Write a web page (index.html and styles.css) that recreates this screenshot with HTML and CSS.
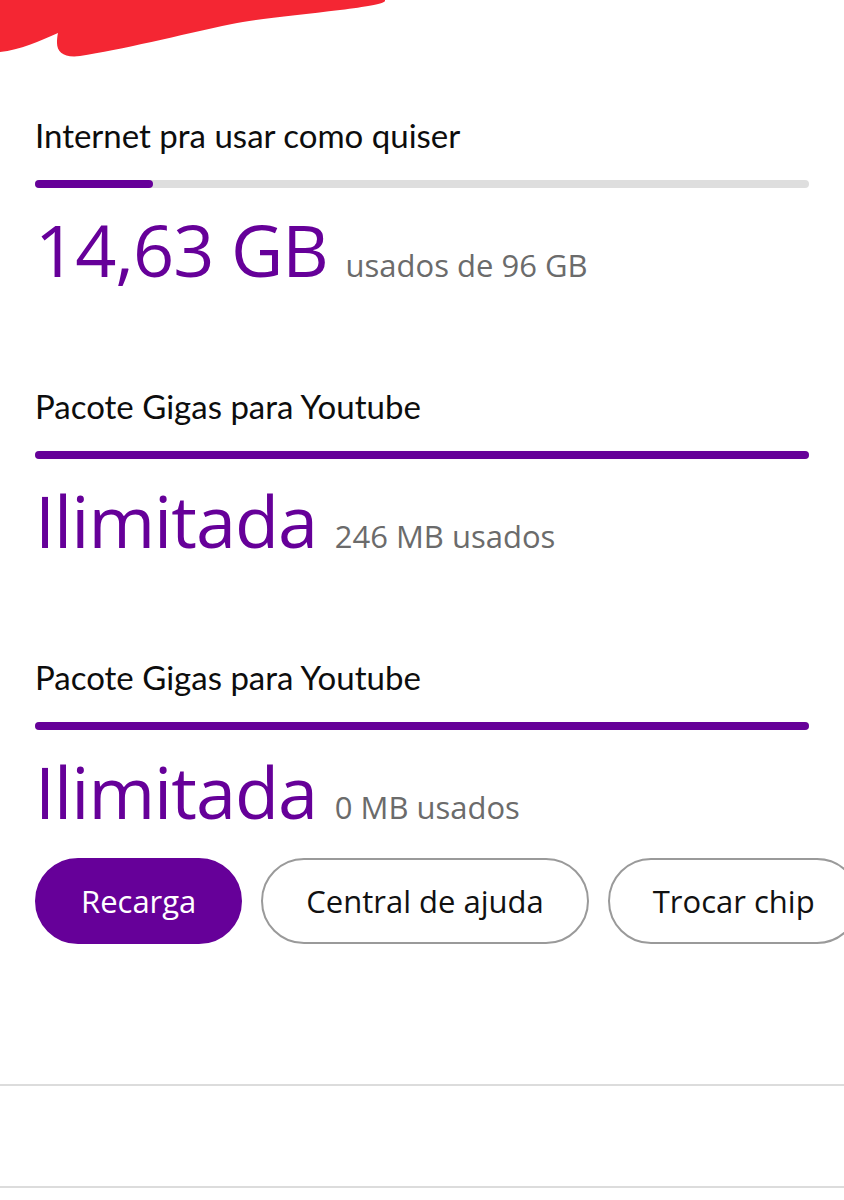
FILE: index.html
```html
<!DOCTYPE html>
<html lang="pt-BR">

<head>
	<meta charset="UTF-8">
	<meta name="viewport" content="width=device-width, initial-scale=1.0">
	<title>Meu consumo</title>
	<link rel="stylesheet" href="styles.css">
</head>

<body>
	<svg class="rabisco" width="385" height="58" viewBox="0 0 385 58">
		<path d="M0 0 H386 C384 4 370 6 340 10 C300 15 255 19 232 24 C180 35 120 50 80 56 C64 58 57 52 57 43 C57 37 58 33 58 33 C40 41 20 50 0 52 Z" fill="#f42633" />
	</svg>

	<main class="consumo">
		<section class="pacote">
			<h2>Internet pra usar como quiser</h2>
			<div class="barra"><div class="preenchido" style="width: 15.2%"></div></div>
			<p class="valor">14,63 GB <span>usados de 96 GB</span></p>
		</section>

		<section class="pacote">
			<h2>Pacote Gigas para Youtube</h2>
			<div class="barra"><div class="preenchido" style="width: 100%"></div></div>
			<p class="valor">Ilimitada <span>246 MB usados</span></p>
		</section>

		<section class="pacote">
			<h2>Pacote Gigas para Youtube</h2>
			<div class="barra"><div class="preenchido" style="width: 100%"></div></div>
			<p class="valor">Ilimitada <span>0 MB usados</span></p>
		</section>

		<div class="acoes">
			<button class="botao principal">Recarga</button>
			<button class="botao">Central de ajuda</button>
			<button class="botao">Trocar chip</button>
		</div>
	</main>

	<div class="rodape"></div>
</body>

</html>
```

FILE: styles.css
```css
body {
	margin: 0;
	background: #fff;
	font-family: "Lato", "Open Sans", sans-serif;
	color: #111;
	overflow-x: hidden;
}

.rabisco {
	display: block;
}

.consumo {
	padding: 0 35px;
}

.pacote {
	margin-top: 59px;
}

.pacote + .pacote {
	margin-top: 99px;
}

.pacote h2 {
	margin: 0;
	font-size: 33px;
	line-height: 36px;
	font-weight: 400;
	color: #0d0d0d;
}

.barra {
	margin-top: 27px;
	height: 8px;
	border-radius: 4px;
	background: #dedede;
}

.preenchido {
	height: 100%;
	border-radius: 4px;
	background: #660099;
}

.valor {
	margin: 21px 0 0;
	font-family: "Open Sans", sans-serif;
	font-size: 72px;
	line-height: 80px;
	letter-spacing: -1px;
	color: #660099;
	white-space: nowrap;
}

.valor span {
	font-size: 31px;
	line-height: 1;
	letter-spacing: 0;
	color: #6b6b6b;
}

.acoes {
	display: flex;
	gap: 19px;
	margin-top: 27px;
}

.botao {
	flex-shrink: 0;
	height: 86px;
	padding: 0 43px;
	border: 2px solid #9a9a9a;
	border-radius: 43px;
	background: #fff;
	font-family: "Open Sans", sans-serif;
	font-size: 31px;
	color: #111;
}

.botao.principal {
	padding: 0 44px;
	border-color: #660099;
	background: #660099;
	color: #fff;
}

.rodape {
	margin-top: 140px;
	height: 100px;
	border-top: 2px solid #dcdcdc;
	border-bottom: 2px solid #dcdcdc;
}
```
